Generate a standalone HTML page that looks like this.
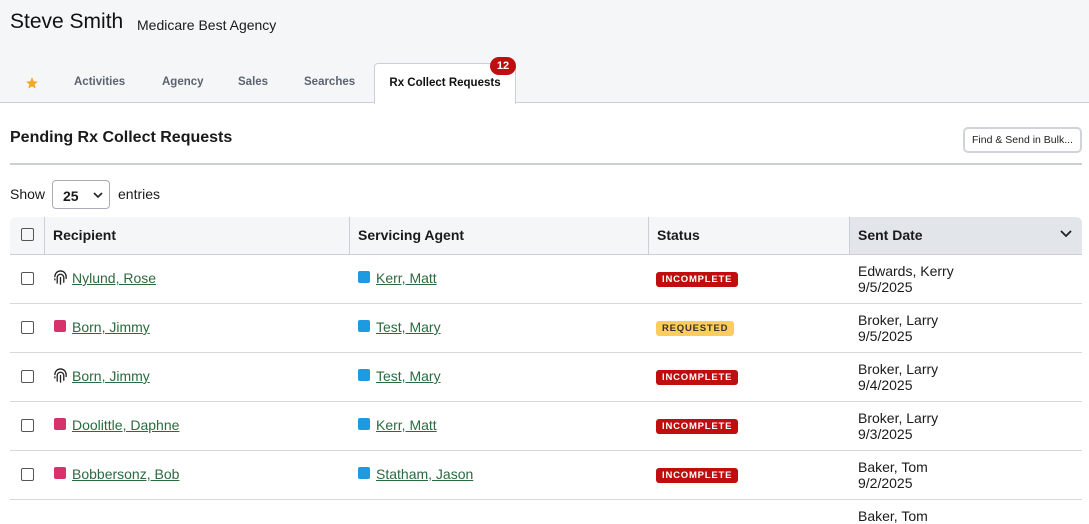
<!DOCTYPE html>
<html><head><style>
*{box-sizing:border-box;margin:0;padding:0}
body{width:1089px;height:515px;overflow:hidden;background:#fff;font-family:"Liberation Sans",sans-serif;color:#1a1a1a;position:relative}
.hdr{position:absolute;left:0;top:0;width:1089px;height:103px;background:#f5f6f8;border-bottom:1px solid #ccd0d5}
.name{position:absolute;left:10px;top:10px;font-size:21px;color:#111}
.agency{position:absolute;left:137px;top:17px;font-size:14px}
.tab{position:absolute;top:76px;font-size:11.5px;font-weight:bold;color:#5b6270}
.active{position:absolute;left:374px;top:63px;width:142px;height:41px;background:#fff;border:1px solid #ccd0d5;border-bottom:none;border-radius:4px 4px 0 0;font-size:11.5px;font-weight:bold;color:#111;text-align:center;line-height:38px}
.badge{position:absolute;left:490px;top:57px;width:26px;height:18px;background:#c00d0d;color:#fff;border-radius:9px;font-size:11px;font-weight:bold;text-align:center;line-height:18px}
h1{position:absolute;left:10px;top:129px;font-size:16px;font-weight:bold}
.hr{position:absolute;left:10px;top:163px;width:1072px;height:2px;background:#ccd0d5}
.btn{position:absolute;left:963px;top:127px;width:119px;height:26px;border:2px solid #d0d4d9;border-radius:5px;font-size:10.5px;text-align:center;line-height:22px;color:#222;background:#fff}
.show{position:absolute;left:10px;top:186px;font-size:14px}
.sel{position:absolute;left:52px;top:180px;width:58px;height:29px;border:1px solid #aab;border-radius:4px;font-size:14px;padding:7px 0 0 10px;font-weight:bold}
.th{position:absolute;top:217px;height:38px;background:#f5f6f8;border-bottom:1px solid #ccd0d5;font-size:14px;font-weight:bold;line-height:37px;padding-left:8px}
.row{position:absolute;left:10px;width:1072px;height:49px;border-bottom:1px solid #d6d8db}
.cb{position:absolute;left:21px;width:13px;height:13px;border:1px solid #555;border-radius:2px}
.link{position:absolute;font-size:14px;color:#2b6a3e;text-decoration:underline}
.sq{position:absolute;width:12px;height:12px;border-radius:2px}
.tag{position:absolute;left:656px;height:15px;font-size:9.5px;font-weight:bold;letter-spacing:0.8px;border-radius:3px;padding:0 6px;line-height:15px}
.inc{background:#c00d0d;color:#fff}
.req{background:#fccd5c;color:#333}
.sd{position:absolute;left:858px;font-size:14px;line-height:16px}
</style></head><body>
<div class="hdr">
<div class="name">Steve Smith</div><div class="agency">Medicare Best Agency</div>
<svg style="position:absolute;left:25px;top:76px" width="14" height="14" viewBox="0 0 24 24"><path d="M12 2l3 7 7 .6-5.4 4.7 1.7 7.2L12 17.8 5.7 21.5l1.7-7.2L2 9.6 9 9z" fill="#f5a623"/></svg>
<div class="tab" style="left:74px">Activities</div>
<div class="tab" style="left:162px">Agency</div>
<div class="tab" style="left:238px">Sales</div>
<div class="tab" style="left:304px">Searches</div>
<div class="active">Rx Collect Requests</div>
<div class="badge">12</div>
</div>
<h1>Pending Rx Collect Requests</h1>
<div class="btn">Find &amp; Send in Bulk...</div>
<div class="hr"></div>
<div class="show">Show</div><div class="sel">25 <svg style="position:absolute;right:6px;top:11px" width="10" height="7"><path d="M1 1l4 4 4-4" stroke="#222" stroke-width="1.6" fill="none"/></svg></div>
<div class="show" style="left:118px">entries</div>
<div class="th" style="left:10px;width:35px;border-radius:6px 0 0 0;border-right:1px solid #ccd0d5"></div>
<div class="cb" style="top:228px"></div>
<div class="th" style="left:45px;width:305px;border-right:1px solid #ccd0d5">Recipient</div>
<div class="th" style="left:350px;width:299px;border-right:1px solid #ccd0d5">Servicing Agent</div>
<div class="th" style="left:649px;width:201px;border-right:1px solid #ccd0d5">Status</div>
<div class="th" style="left:850px;width:232px;background:#e2e5e9;border-radius:0 6px 0 0">Sent Date<svg style="position:absolute;right:10px;top:13px" width="12" height="8"><path d="M1 1l5 5 5-5" stroke="#222" stroke-width="1.8" fill="none"/></svg></div>

<div class="row" style="top:255px"></div><div class="row" style="top:304px"></div><div class="row" style="top:353px"></div><div class="row" style="top:402px"></div><div class="row" style="top:451px"></div>

<div class="cb" style="top:272px"></div><div class="cb" style="top:321px"></div><div class="cb" style="top:370px"></div><div class="cb" style="top:419px"></div><div class="cb" style="top:468px"></div>

<svg style="position:absolute;left:53px;top:270px" width="15" height="15" viewBox="0 0 16 16"><g stroke="#222" stroke-width="1.4" fill="none" stroke-linecap="round"><path d="M2 7a6 6 0 0 1 12 0v2"/><path d="M4.5 14V8a3.5 3.5 0 0 1 7 0v5"/><path d="M8 8v7"/><path d="M2 9.5v1"/></g></svg>
<a class="link" style="left:72px;top:270px">Nylund, Rose</a>
<div class="sq" style="left:54px;top:320px;background:#d6336c"></div><a class="link" style="left:72px;top:319px">Born, Jimmy</a>
<svg style="position:absolute;left:53px;top:368px" width="15" height="15" viewBox="0 0 16 16"><g stroke="#222" stroke-width="1.4" fill="none" stroke-linecap="round"><path d="M2 7a6 6 0 0 1 12 0v2"/><path d="M4.5 14V8a3.5 3.5 0 0 1 7 0v5"/><path d="M8 8v7"/><path d="M2 9.5v1"/></g></svg>
<a class="link" style="left:72px;top:368px">Born, Jimmy</a>
<div class="sq" style="left:54px;top:418px;background:#d6336c"></div><a class="link" style="left:72px;top:417px">Doolittle, Daphne</a>
<div class="sq" style="left:54px;top:467px;background:#d6336c"></div><a class="link" style="left:72px;top:466px">Bobbersonz, Bob</a>

<div class="sq" style="left:358px;top:271px;background:#1e9be0"></div><a class="link" style="left:376px;top:270px">Kerr, Matt</a>
<div class="sq" style="left:358px;top:320px;background:#1e9be0"></div><a class="link" style="left:376px;top:319px">Test, Mary</a>
<div class="sq" style="left:358px;top:369px;background:#1e9be0"></div><a class="link" style="left:376px;top:368px">Test, Mary</a>
<div class="sq" style="left:358px;top:418px;background:#1e9be0"></div><a class="link" style="left:376px;top:417px">Kerr, Matt</a>
<div class="sq" style="left:358px;top:467px;background:#1e9be0"></div><a class="link" style="left:376px;top:466px">Statham, Jason</a>

<div class="tag inc" style="top:272px">INCOMPLETE</div>
<div class="tag req" style="top:321px">REQUESTED</div>
<div class="tag inc" style="top:370px">INCOMPLETE</div>
<div class="tag inc" style="top:419px">INCOMPLETE</div>
<div class="tag inc" style="top:468px">INCOMPLETE</div>

<div class="sd" style="top:263px">Edwards, Kerry<br>9/5/2025</div>
<div class="sd" style="top:312px">Broker, Larry<br>9/5/2025</div>
<div class="sd" style="top:361px">Broker, Larry<br>9/4/2025</div>
<div class="sd" style="top:410px">Broker, Larry<br>9/3/2025</div>
<div class="sd" style="top:459px">Baker, Tom<br>9/2/2025</div>
<div class="sd" style="top:508px">Baker, Tom</div>
</body></html>
